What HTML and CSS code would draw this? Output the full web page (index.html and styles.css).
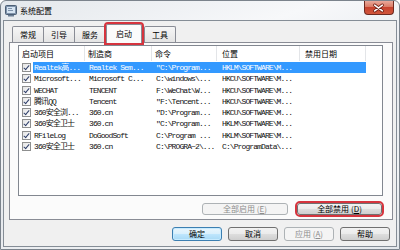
FILE: index.html
```html
<!DOCTYPE html>
<html lang="zh-CN">
  <head>
    <meta charset="UTF-8" />
    <meta name="viewport" content="width=device-width, initial-scale=1.0" />
    <title>系统配置</title>
    <link rel="stylesheet" href="styles.css">
  </head>

  <body>
    <div class="window">
      <div class="titlebar">
        <svg class="app-icon" width="12" height="12" viewBox="0 0 12 12">
          <rect x="0.5" y="0.5" width="11" height="9" rx="1" fill="#7f93ab" stroke="#4d5f75" />
          <rect x="2" y="2" width="8" height="6" fill="#d6e4f2" />
          <rect x="3" y="3" width="4" height="1" fill="#7f93ab" />
          <rect x="3" y="5" width="5" height="1" fill="#7f93ab" />
          <rect x="3" y="10" width="6" height="1.5" fill="#6a7d94" />
        </svg>
        <span class="title">系统配置</span>
        <div class="close-btn">
          <svg width="30" height="14" viewBox="0 0 30 14">
            <path d="M11 4 L19 10 M19 4 L11 10" stroke="#6b1d12" stroke-width="3.2" stroke-linecap="round" />
            <path d="M11 4 L19 10 M19 4 L11 10" stroke="#ffffff" stroke-width="1.6" stroke-linecap="round" />
          </svg>
        </div>
      </div>

      <div class="client">
        <div class="tabs">
          <div class="tab">常规</div>
          <div class="tab">引导</div>
          <div class="tab">服务</div>
          <div class="tab active">启动</div>
          <div class="tab">工具</div>
        </div>

        <div class="panel">
          <div class="listview">
            <div class="lv-header">
              <div class="hcol">启动项目</div>
              <div class="hcol">制造商</div>
              <div class="hcol">命令</div>
              <div class="hcol">位置</div>
              <div class="hcol">禁用日期</div>
            </div>

            <div class="lv-row sel">
              <span class="check"></span>
              <span class="cell first">Realtek高...</span>
              <span class="cell">Realtek Sem...</span>
              <span class="cell">"C:\Program...</span>
              <span class="cell">HKLM\SOFTWARE\M...</span>
              <span class="cell"></span>
            </div>
            <div class="lv-row">
              <span class="check"></span>
              <span class="cell first">Microsoft...</span>
              <span class="cell">Microsoft C...</span>
              <span class="cell">C:\windows\...</span>
              <span class="cell">HKCU\SOFTWARE\M...</span>
              <span class="cell"></span>
            </div>
            <div class="lv-row">
              <span class="check"></span>
              <span class="cell first">WECHAT</span>
              <span class="cell">TENCENT</span>
              <span class="cell">F:\WeChat\W...</span>
              <span class="cell">HKCU\SOFTWARE\M...</span>
              <span class="cell"></span>
            </div>
            <div class="lv-row">
              <span class="check"></span>
              <span class="cell first">腾讯QQ</span>
              <span class="cell">Tencent</span>
              <span class="cell">"F:\Tencent...</span>
              <span class="cell">HKCU\SOFTWARE\M...</span>
              <span class="cell"></span>
            </div>
            <div class="lv-row">
              <span class="check"></span>
              <span class="cell first">360安全浏...</span>
              <span class="cell">360.cn</span>
              <span class="cell">"D:\Program...</span>
              <span class="cell">HKCU\SOFTWARE\M...</span>
              <span class="cell"></span>
            </div>
            <div class="lv-row">
              <span class="check"></span>
              <span class="cell first">360安全卫士</span>
              <span class="cell">360.cn</span>
              <span class="cell">"C:\Program...</span>
              <span class="cell">HKLM\SOFTWARE\M...</span>
              <span class="cell"></span>
            </div>
            <div class="lv-row">
              <span class="check"></span>
              <span class="cell first">RFileLog</span>
              <span class="cell">DoGoodSoft</span>
              <span class="cell">C:\Program ...</span>
              <span class="cell">HKLM\SOFTWARE\M...</span>
              <span class="cell"></span>
            </div>
            <div class="lv-row">
              <span class="check"></span>
              <span class="cell first">360安全卫士</span>
              <span class="cell">360.cn</span>
              <span class="cell">C:\PROGRA~2\...</span>
              <span class="cell">C:\ProgramData\...</span>
              <span class="cell"></span>
            </div>
          </div>

          <div class="panel-buttons">
            <button type="button" class="btn enable-all" disabled>全部启用 (<u>E</u>)</button>
            <button type="button" class="btn disable-all marked">全部禁用 (<u>D</u>)</button>
          </div>
        </div>

        <div class="dialog-buttons">
          <button type="button" class="btn default">确定</button>
          <button type="button" class="btn">取消</button>
          <button type="button" class="btn" disabled>应用 (<u>A</u>)</button>
          <button type="button" class="btn">帮助</button>
        </div>
      </div>
    </div>
  </body>
</html>
```

FILE: styles.css
```css
* {
  box-sizing: border-box;
}

body {
  margin: 0;
  font-family: "Noto Sans CJK SC", sans-serif;
  font-size: 8px;
  color: #000;
  background-color: #ffffff;
}

.window {
  width: 400px;
  height: 250px;
  display: flex;
  flex-direction: column;
  padding: 0 2px 2px;
  border: 1px solid #7b838c;
  border-radius: 6px 6px 0 0;
  background: linear-gradient(160deg, #e4e8ec 0%, #f7f8fa 30%, #e6e9ed 55%, #f1f3f5 80%, #e3e7eb 100%);
}

.titlebar {
  height: 19px;
  display: flex;
  align-items: center;
}

.app-icon {
  margin-left: 2px;
  flex-shrink: 0;
}

.title {
  margin-left: 3px;
  font-size: 8px;
  line-height: 1;
}

.close-btn {
  margin-left: auto;
  margin-right: 3px;
  align-self: flex-start;
  width: 30px;
  height: 14px;
  border: 1px solid #6e2a20;
  border-top: none;
  border-radius: 0 0 4px 4px;
  background: linear-gradient(#e9a99b 0%, #db7b65 45%, #c7432e 50%, #d2563c 100%);
  display: flex;
}

.close-btn svg {
  margin-left: -1px;
}

.client {
  flex: 1;
  display: flex;
  flex-direction: column;
  padding: 0 3px 0 5px;
  border: 1px solid #858d96;
  background-color: #f0f0f0;
}

/* tabs */

.tabs {
  height: 21px;
  display: flex;
  align-items: flex-end;
  padding-left: 3px;
}

.tab {
  height: 16px;
  padding: 0 7px;
  margin-right: -1px;
  display: flex;
  align-items: center;
  border: 1px solid #898c95;
  border-bottom: none;
  border-radius: 2px 2px 0 0;
  background: linear-gradient(#f6f6f6, #e4e4e4);
  line-height: 1;
}

.tab.active {
  position: relative;
  z-index: 1;
  height: 19px;
  margin: 0 2px -1px 1px;
  padding: 0 9px;
  background: #fbfbfb;
  outline: 2px solid #d6343e;
}

/* tab page */

.panel {
  height: 178px;
  display: flex;
  flex-direction: column;
  padding: 2px 9px 4px 8px;
  border: 1px solid #898c95;
  background-color: #fbfbfb;
}

.listview {
  height: 151px;
  border: 1px solid #828790;
  background-color: #fff;
}

.lv-header {
  height: 15px;
  display: grid;
  grid-template-columns: 66px 67px 65px 83px 66px;
  margin-bottom: 1px;
}

.hcol {
  display: flex;
  align-items: center;
  padding-left: 3px;
  border-right: 1px solid #e3e5e8;
  line-height: 1;
  white-space: nowrap;
}

.hcol:nth-child(4),
.hcol:nth-child(5) {
  padding-left: 5px;
}

.lv-row {
  height: 11.25px;
  display: grid;
  grid-template-columns: 14px 52px 67px 65px 83px 66px;
  font-family: "Liberation Mono", "Noto Sans CJK SC", monospace;
  font-size: 8px;
  letter-spacing: -0.9px;
  line-height: 11.25px;
  color: #111;
}

.cell {
  padding-left: 4px;
  overflow: hidden;
  white-space: nowrap;
}

.cell.first {
  padding-left: 1px;
}

.cell:nth-child(5) {
  padding-left: 5px;
}

.lv-row.sel .cell {
  background-color: #3399ff;
  color: #fff;
}

.check {
  width: 9px;
  height: 9px;
  margin: 1px 0 0 3px;
  border: 1px solid #8e8f8f;
  background: linear-gradient(135deg, #e4e4e4, #ffffff) ;
  position: relative;
}

.check::after {
  content: "";
  position: absolute;
  left: 2px;
  top: 0px;
  width: 2px;
  height: 5px;
  border: solid #2f3f6a;
  border-width: 0 1.5px 1.5px 0;
  transform: rotate(40deg);
}

/* buttons */

.btn {
  font-family: "Noto Sans CJK SC", sans-serif;
  font-size: 8px;
  line-height: 1;
  padding: 0;
  color: #000;
  border: 1px solid #707070;
  border-radius: 3px;
  background: linear-gradient(#f2f2f2 0%, #ebebeb 48%, #dddddd 52%, #cfcfcf 100%);
}

.btn u {
  text-decoration: underline;
}

.btn:disabled {
  color: #8d8d8d;
  border-color: #adb2b5;
  background: #f4f4f4;
}

.btn.default {
  border-color: #3c7fb1;
  background: linear-gradient(#eaf6fd 0%, #d9f0fc 48%, #bee6fd 52%, #a7d9f5 100%);
  box-shadow: inset 0 0 0 1px #c7ebff;
}

.panel-buttons {
  display: flex;
  justify-content: flex-end;
  margin-top: 7px;
  gap: 9px;
}

.panel-buttons .btn {
  height: 12px;
}

.enable-all {
  width: 86px;
}

.disable-all {
  width: 85px;
  margin-right: 1px;
}

.marked {
  outline: 2px solid #d6343e;
  outline-offset: 0;
}

.dialog-buttons {
  display: flex;
  justify-content: flex-end;
  gap: 6px;
  margin-top: 7px;
  padding-right: 3px;
}

.dialog-buttons .btn {
  width: 50px;
  height: 14px;
}
```
